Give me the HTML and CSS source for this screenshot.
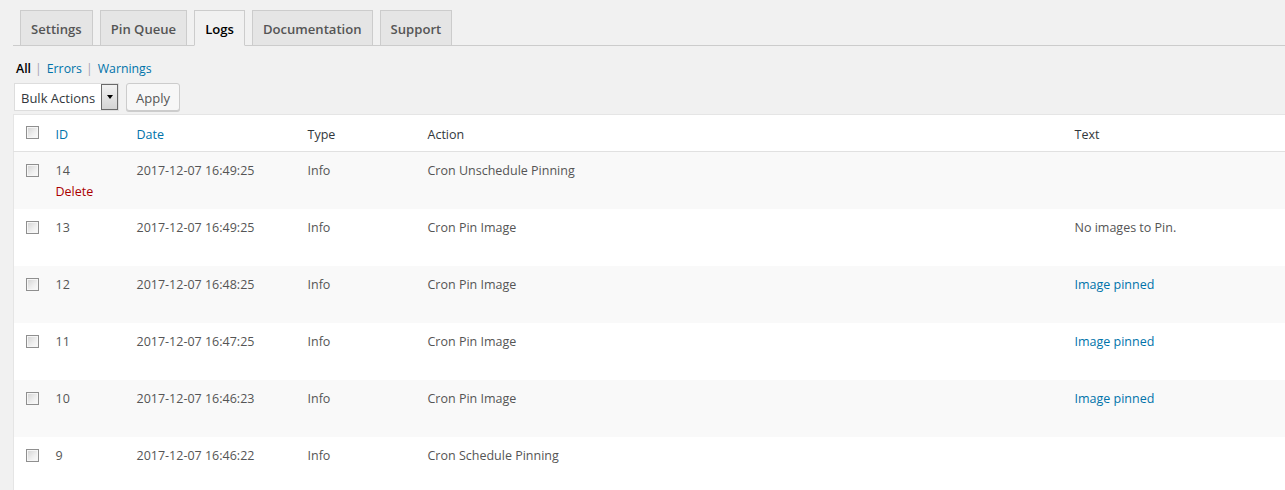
FILE: index.html
```html
<!DOCTYPE html>
<html lang="en">
<head>
<meta charset="utf-8">
<title>Logs</title>
<link rel="stylesheet" href="styles.css">
</head>
<body>
<div class="wrap">
  <nav class="tabs">
    <a class="tab" href="#">Settings</a>
    <a class="tab" href="#">Pin Queue</a>
    <a class="tab active" href="#">Logs</a>
    <a class="tab" href="#">Documentation</a>
    <a class="tab" href="#">Support</a>
  </nav>
  <ul class="subsubsub">
    <li><a class="current" href="#">All</a><span class="sep">|</span></li>
    <li><a href="#">Errors</a><span class="sep">|</span></li>
    <li><a href="#">Warnings</a></li>
  </ul>
  <div class="tablenav">
    <div class="select">
      <span class="select-label">Bulk Actions</span>
      <span class="select-arrow"><span class="tri"></span></span>
    </div>
    <button class="button" type="button">Apply</button>
  </div>
  <table class="logs">
    <colgroup>
      <col class="c-cb"><col class="c-id"><col class="c-date"><col class="c-type"><col class="c-action"><col>
    </colgroup>
    <thead>
      <tr>
        <th class="cb"><span class="check"></span></th>
        <th><a href="#">ID</a></th>
        <th><a href="#">Date</a></th>
        <th>Type</th>
        <th>Action</th>
        <th>Text</th>
      </tr>
    </thead>
    <tbody>
      <tr class="alt">
        <td class="cb"><span class="check"></span></td>
        <td>14<div class="row-actions"><a class="del" href="#">Delete</a></div></td>
        <td>2017-12-07 16:49:25</td>
        <td>Info</td>
        <td>Cron Unschedule Pinning</td>
        <td></td>
      </tr>
      <tr>
        <td class="cb"><span class="check"></span></td>
        <td>13<div class="row-actions"></div></td>
        <td>2017-12-07 16:49:25</td>
        <td>Info</td>
        <td>Cron Pin Image</td>
        <td>No images to Pin.</td>
      </tr>
      <tr class="alt">
        <td class="cb"><span class="check"></span></td>
        <td>12<div class="row-actions"></div></td>
        <td>2017-12-07 16:48:25</td>
        <td>Info</td>
        <td>Cron Pin Image</td>
        <td><a href="#">Image pinned</a></td>
      </tr>
      <tr>
        <td class="cb"><span class="check"></span></td>
        <td>11<div class="row-actions"></div></td>
        <td>2017-12-07 16:47:25</td>
        <td>Info</td>
        <td>Cron Pin Image</td>
        <td><a href="#">Image pinned</a></td>
      </tr>
      <tr class="alt">
        <td class="cb"><span class="check"></span></td>
        <td>10<div class="row-actions"></div></td>
        <td>2017-12-07 16:46:23</td>
        <td>Info</td>
        <td>Cron Pin Image</td>
        <td><a href="#">Image pinned</a></td>
      </tr>
      <tr>
        <td class="cb"><span class="check"></span></td>
        <td>9<div class="row-actions"></div></td>
        <td>2017-12-07 16:46:22</td>
        <td>Info</td>
        <td>Cron Schedule Pinning</td>
        <td></td>
      </tr>
    </tbody>
  </table>
</div>
</body>
</html>
```

FILE: styles.css
```css
html, body {
  margin: 0;
  padding: 0;
  background: #f1f1f1;
  overflow: hidden;
}
body {
  font-family: "Open Sans", "Noto Sans", sans-serif;
  font-size: 12.5px;
  color: #555;
}
a { text-decoration: none; color: #0073aa; }

.wrap {
  padding-left: 13px;
  padding-top: 10px;
}

.tabs {
  display: flex;
  padding-left: 7px;
  border-bottom: 1px solid #ccc;
  height: 35px;
}
.tab {
  display: block;
  box-sizing: border-box;
  height: 36px;
  padding: 6px 10px 4px;
  line-height: 24px;
  font-size: 13.1px;
  font-weight: 600;
  color: #555;
  background: #e5e5e5;
  border: 1px solid #ccc;
  margin-right: 7px;
}
.tab.active {
  background: #f1f1f1;
  color: #000;
  border-bottom-color: #f1f1f1;
}

.subsubsub {
  list-style: none;
  margin: 13px 0 0 3px;
  padding: 0;
  display: flex;
  line-height: 20px;
  font-size: 12.3px;
  color: #888;
}
.subsubsub .current { color: #000; font-weight: 600; }
.sep { margin: 0 5px 0 4px; color: #a7a2b0; }

.tablenav {
  display: flex;
  align-items: center;
  gap: 7px;
  margin: 4px 0 3px 1px;
  height: 28px;
}
.select {
  box-sizing: border-box;
  width: 105px;
  height: 28px;
  background: #fff;
  border: 1px solid #ddd;
  display: flex;
  align-items: center;
  justify-content: space-between;
  padding: 0 0 0 6px;
  color: #32373c;
}
.select-label { font-size: 13px; line-height: 20px; padding-top: 1px; }
.select-arrow {
  box-sizing: border-box;
  width: 17px;
  height: 26px;
  border: 1px solid #6a6a6a;
  background: linear-gradient(to bottom, #f2f2f2, #d4d4d4);
  display: flex;
  align-items: center;
  justify-content: center;
}
.tri {
  width: 0;
  height: 0;
  border-left: 3.5px solid transparent;
  border-right: 3.5px solid transparent;
  border-top: 4px solid #000;
}
.button {
  box-sizing: border-box;
  height: 28px;
  width: 54px;
  padding: 1px 8px 0;
  font-family: inherit;
  font-size: 13px;
  color: #555;
  background: #f7f7f7;
  border: 1px solid #ccc;
  border-radius: 3px;
  box-shadow: 0 1px 0 #ccc;
}

.logs {
  width: calc(100% + 10px);
  table-layout: fixed;
  border-collapse: collapse;
  background: #fff;
  border: 1px solid #e5e5e5;
  line-height: 20px;
}
.c-cb { width: 32px; }
.c-id { width: 81px; }
.c-date { width: 171px; }
.c-type { width: 120px; }
.c-action { width: 647px; }

.logs th {
  text-align: left;
  font-weight: 400;
  color: #32373c;
  padding: 10px 10px 6px;
  border-bottom: 1px solid #e1e1e1;
  vertical-align: top;
}
.logs td {
  padding: 9px 10px 7px;
  vertical-align: top;
}
.logs th.cb { padding: 11px 0 0 12px; }
.logs td.cb { padding: 12px 0 0 12px; }
.logs tr.alt td { background: #f9f9f9; }

.row-actions {
  padding-top: 1px;
  height: 20px;
  line-height: 19px;
}
.del { color: #a00; }

.check {
  display: block;
  box-sizing: border-box;
  width: 13px;
  height: 13px;
  border: 1px solid #8f8f8f;
  box-shadow: inset 0 0 0 1px #f6f6f6;
  background: linear-gradient(135deg, #d2d2d2 0%, #f0f0f0 60%, #fbfbfb 100%);
}
```
